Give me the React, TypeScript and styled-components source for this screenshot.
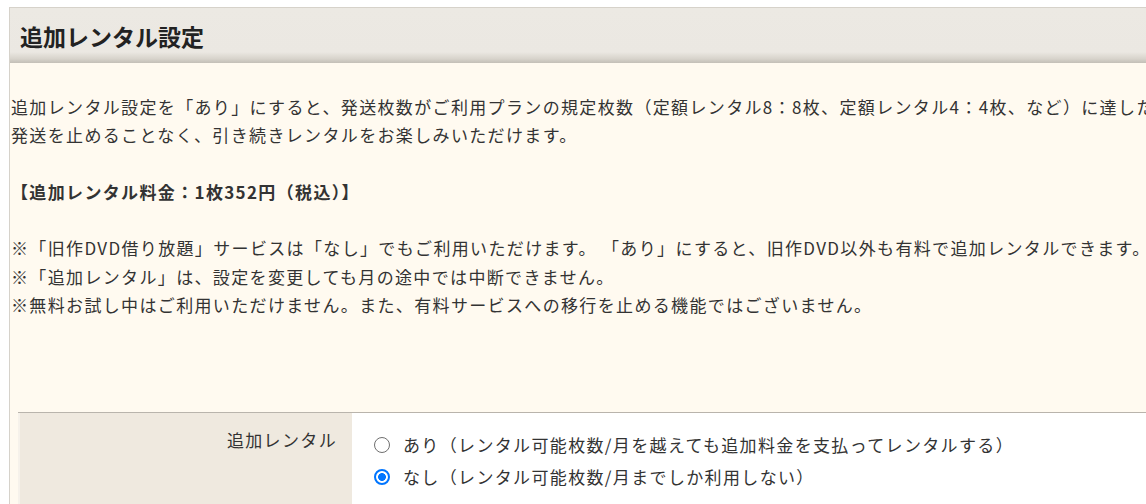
import React from 'react';
import styled, { createGlobalStyle } from 'styled-components';

const GlobalStyle = createGlobalStyle`
  html, body {
    margin: 0;
    padding: 0;
    background: #ffffff;
    overflow: hidden;
  }
  body {
    padding: 7px 0 0 9px;
    font-family: "Noto Sans CJK JP", "Noto Sans", sans-serif;
    color: #333333;
  }
`;

const Section = styled.section`
  width: 1400px;
  border-top: 1px solid #d6d2ca;
  border-left: 1px solid #d6d2ca;
  background: #fffaf0;
`;

const Header = styled.h2`
  margin: 0;
  height: 55px;
  padding: 0 0 0 10px;
  display: flex;
  align-items: center;
  font-size: 23px;
  font-weight: 700;
  color: #222222;
  background: linear-gradient(
    to bottom,
    #ece9e3 0%,
    #ebe8e2 80%,
    #d8d4cc 92%,
    #c3bfb7 100%
  );
`;

const Body = styled.div`
  padding: 30px 0 120px 1px;
  font-size: 17px;
  letter-spacing: 1.35px;
  line-height: 28.3px;
`;

const Para = styled.p`
  margin: 0;
  white-space: nowrap;
`;

const Strong = styled.strong`
  font-weight: 700;
`;

const Table = styled.div`
  margin: 93px 0 0 7px;
  display: grid;
  grid-template-columns: 334px 1fr;
  border-top: 1px solid #b9b4ac;
`;

const LabelCell = styled.div`
  background: #efe9df;
  border-left: 2px solid #f6f2eb;
  padding: 13px 15px 0 0;
  text-align: right;
  line-height: 28px;
  height: 120px;
`;

const ValueCell = styled.div`
  background: #ffffff;
  padding: 16px 0 0 22px;
  display: flex;
  flex-direction: column;
`;

const Option = styled.label`
  display: flex;
  align-items: center;
  gap: 13px;
  height: 32px;
  white-space: nowrap;
`;

const Radio = styled.input`
  appearance: none;
  margin: 0;
  width: 16px;
  height: 16px;
  flex: none;
  border-radius: 50%;
  border: 1.5px solid #6f6f6f;
  background: #ffffff;
  box-sizing: border-box;

  &:checked {
    border: 2px solid #0075ff;
    background: radial-gradient(circle, #0075ff 0 3.6px, #ffffff 4.2px);
  }
`;

export default function App() {
  return (
    <>
      <GlobalStyle />
      <Section>
        <Header>追加レンタル設定</Header>
        <Body>
          <Para>
            追加レンタル設定を「あり」にすると、発送枚数がご利用プランの規定枚数（定額レンタル8：8枚、定額レンタル4：4枚、など）に達した後も
          </Para>
          <Para>発送を止めることなく、引き続きレンタルをお楽しみいただけます。</Para>
          <Para>&nbsp;</Para>
          <Para>
            <Strong>【追加レンタル料金：1枚352円（税込）】</Strong>
          </Para>
          <Para>&nbsp;</Para>
          <Para>
            ※「旧作DVD借り放題」サービスは「なし」でもご利用いただけます。 「あり」にすると、旧作DVD以外も有料で追加レンタルできます。
          </Para>
          <Para>※「追加レンタル」は、設定を変更しても月の途中では中断できません。</Para>
          <Para>※無料お試し中はご利用いただけません。また、有料サービスへの移行を止める機能ではございません。</Para>
          <Table>
            <LabelCell>追加レンタル</LabelCell>
            <ValueCell>
              <Option>
                <Radio type="radio" name="extra" />
                あり（レンタル可能枚数/月を越えても追加料金を支払ってレンタルする）
              </Option>
              <Option>
                <Radio type="radio" name="extra" defaultChecked />
                なし（レンタル可能枚数/月までしか利用しない）
              </Option>
            </ValueCell>
          </Table>
        </Body>
      </Section>
    </>
  );
}
